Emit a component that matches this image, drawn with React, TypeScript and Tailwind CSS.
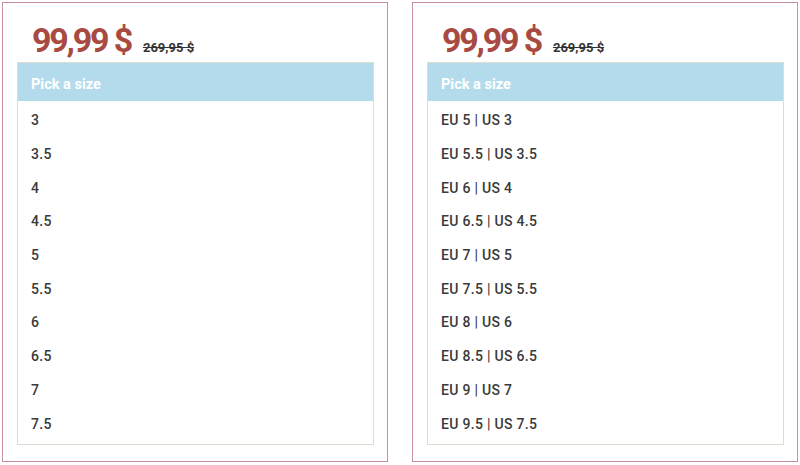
import React from "react";

const left = ["3", "3.5", "4", "4.5", "5", "5.5", "6", "6.5", "7", "7.5"];
const right = [
  "EU 5 | US 3",
  "EU 5.5 | US 3.5",
  "EU 6 | US 4",
  "EU 6.5 | US 4.5",
  "EU 7 | US 5",
  "EU 7.5 | US 5.5",
  "EU 8 | US 6",
  "EU 8.5 | US 6.5",
  "EU 9 | US 7",
  "EU 9.5 | US 7.5",
];

function Card({ items }: { items: string[] }) {
  return (
    <div className="w-[386px] h-[460px] border border-[#c8919e] bg-white pl-[14px] pr-[13px] pt-[21px]">
      <div className="flex items-baseline pl-[15px] h-[32px] leading-[32px]">
        <span className="text-[34px] font-bold text-[#a84a41] tracking-[-2.2px]">99,99 $</span>
        <span className="ml-[12px] text-[13px] font-bold text-[#333] line-through">269,95 $</span>
      </div>
      <div className="mt-[6px] border border-[#deddd2]">
        <div className="h-[38px] bg-[#b3dbec] flex items-center pl-[13px] pt-[5px] text-[14.5px] font-bold text-white">
          Pick a size
        </div>
        <div className="pt-[3px] pb-[3px]">
          {items.map((t) => (
            <div key={t} className="h-[33.7px] flex items-center pl-[13px] text-[14px] font-medium text-[#3a3a3a] tracking-[0.3px] whitespace-pre">
              {t}
            </div>
          ))}
        </div>
      </div>
    </div>
  );
}

export default function App() {
  return (
    <div className="w-[800px] h-[465px] bg-white flex gap-[24px] pl-[2px] pt-[2px]" style={{ fontFamily: "Roboto, 'Liberation Sans', sans-serif" }}>
      <Card items={left} />
      <Card items={right} />
    </div>
  );
}
